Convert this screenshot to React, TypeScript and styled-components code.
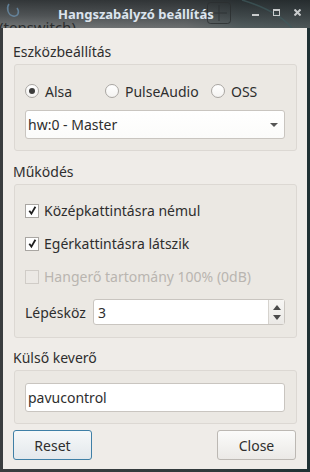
import React from 'react';
import styled, { createGlobalStyle } from 'styled-components';

const Global = createGlobalStyle`
  html, body { margin: 0; padding: 0; }
  body {
    background: #2b2f31;
    font-family: "Noto Sans", "DejaVu Sans", sans-serif;
    font-size: 14px;
    color: #2e2e2e;
  }
`;

const Screen = styled.div`
  width: 310px;
  height: 472px;
  display: flex;
  flex-direction: column;
  overflow: hidden;
  background: linear-gradient(90deg, #3a3d3f 0%, #30393b 70%, #1f3033 100%);
`;

const TitleBar = styled.div`
  position: relative;
  height: 28px;
  flex: none;
  overflow: hidden;
  background:
    linear-gradient(180deg, rgba(40, 44, 46, 0.85) 0%, rgba(70, 74, 76, 0.75) 55%, rgba(120, 122, 122, 0.55) 100%),
    linear-gradient(90deg, #6d7274 0%, #5d6163 60%, #24393c 78%, #1a2c2f 100%);
`;

const Title = styled.div`
  position: absolute;
  left: 58px;
  top: 5px;
  font-weight: bold;
  font-size: 13px;
  color: #dce4ee;
`;

const BehindText = styled.div`
  position: absolute;
  left: -1px;
  top: 17px;
  font-size: 15px;
  color: #2a2c2d;
`;

const Decor = styled.svg`
  position: absolute;
  top: 0;
  left: 0;
`;

const WinButtons = styled.div`
  position: absolute;
  right: 9px;
  top: 9px;
  display: flex;
  gap: 14px;
`;

const Body = styled.div`
  margin: 0 3px;
  height: 441px;
  flex: none;
  background: #efece8;
  padding: 13px 10px 0 10px;
  box-sizing: border-box;
  display: flex;
  flex-direction: column;
`;

const SectionLabel = styled.div<{ $top?: number }>`
  height: 22px;
  line-height: 22px;
  margin-top: ${(p) => p.$top ?? 0}px;
  color: #2e2e2e;
`;

const Group = styled.div<{ $pad: string }>`
  margin: 1px 0 0 1px;
  width: 283px;
  box-sizing: border-box;
  border: 1px solid #dcd8d3;
  border-radius: 3px;
  background: #ebe8e3;
  padding: ${(p) => p.$pad};
  display: flex;
  flex-direction: column;
`;

const RadioRow = styled.div`
  display: flex;
  align-items: center;
  height: 28px;
`;

const RadioItem = styled.label<{ $w: number }>`
  display: flex;
  align-items: center;
  gap: 6px;
  width: ${(p) => p.$w}px;
  flex: none;
`;

const RadioCircle = styled.span<{ $on?: boolean }>`
  width: 12px;
  height: 12px;
  border-radius: 50%;
  border: 1px solid #a9a6a2;
  background: linear-gradient(180deg, #ffffff, #f4f3f1);
  display: flex;
  align-items: center;
  justify-content: center;
  &::after {
    content: '';
    width: 6px;
    height: 6px;
    border-radius: 50%;
    background: ${(p) => (p.$on ? '#3c3c3c' : 'transparent')};
  }
`;

const Combo = styled.div`
  margin-top: 5px;
  height: 29px;
  box-sizing: border-box;
  border: 1px solid #c9c5c0;
  border-radius: 3px;
  background: linear-gradient(180deg, #ffffff, #fbfbfa);
  display: flex;
  align-items: center;
  justify-content: space-between;
  padding: 0 6px 0 2px;
`;

const Arrow = styled.span`
  width: 0;
  height: 0;
  border-left: 4px solid transparent;
  border-right: 4px solid transparent;
  border-top: 4px solid #555;
`;

const CheckRow = styled.label<{ $disabled?: boolean }>`
  display: flex;
  align-items: center;
  gap: 5px;
  height: 33px;
  color: ${(p) => (p.$disabled ? '#b9b5b0' : '#2e2e2e')};
`;

const Box = styled.span<{ $disabled?: boolean }>`
  width: 12px;
  height: 12px;
  border: 1px solid ${(p) => (p.$disabled ? '#d0ccc7' : '#a9a6a2')};
  background: ${(p) => (p.$disabled ? '#ece9e5' : '#ffffff')};
  display: flex;
  align-items: center;
  justify-content: center;
  flex: none;
`;

const SpinRow = styled.div`
  display: flex;
  align-items: center;
  height: 38px;
`;

const Spin = styled.div`
  margin-left: auto;
  width: 192px;
  height: 26px;
  box-sizing: border-box;
  border: 1px solid #c9c5c0;
  border-radius: 3px;
  background: #fff;
  display: flex;
  align-items: stretch;
`;

const SpinText = styled.div`
  flex: 1;
  display: flex;
  align-items: center;
  padding-left: 4px;
`;

const SpinButtons = styled.div`
  width: 15px;
  border-left: 1px solid #d6d3ce;
  background: linear-gradient(180deg, #f7f6f4, #ebe9e6);
  display: flex;
  flex-direction: column;
  align-items: center;
  justify-content: center;
  gap: 5px;
`;

const Tri = styled.span<{ $up?: boolean }>`
  width: 0;
  height: 0;
  border-left: 4px solid transparent;
  border-right: 4px solid transparent;
  ${(p) => (p.$up ? 'border-bottom: 5px solid #4a4a4a;' : 'border-top: 5px solid #4a4a4a;')}
`;

const LineEdit = styled.div`
  height: 29px;
  box-sizing: border-box;
  border: 1px solid #c9c5c0;
  border-radius: 3px;
  background: #fff;
  display: flex;
  align-items: center;
  padding-left: 2px;
`;

const Buttons = styled.div`
  margin-top: 6px;
  padding-right: 1px;
  display: flex;
  justify-content: space-between;
`;

const Button = styled.button<{ $focus?: boolean }>`
  width: 79px;
  height: 30px;
  box-sizing: border-box;
  padding: 0;
  font: inherit;
  font-size: 14px;
  color: #2e2e2e;
  border-radius: 3px;
  border: 1px solid ${(p) => (p.$focus ? '#3f7fa6' : '#bcb8b3')};
  background: ${(p) =>
    p.$focus
      ? 'linear-gradient(180deg, #f6f8f9, #e3e8ec)'
      : 'linear-gradient(180deg, #fbfbfa, #ebe9e6)'};
`;

const Tick = () => (
  <svg width="11" height="11" viewBox="0 0 11 11">
    <path d="M2.3 5.8 L4.4 8.6 L8.4 1.8" fill="none" stroke="#1e1e1e" strokeWidth="1.8" />
  </svg>
);

export default function App() {
  return (
    <>
      <Global />
      <Screen>
        <TitleBar>
          <BehindText>(tenswitch)</BehindText>
          <Decor width="310" height="28">
            <path d="M9 4 C6 8 8 15 13 16 C18 17 20 12 17 8" fill="none" stroke="#6e97b8" strokeWidth="1.5" opacity="0.7" />
            <rect x="207.5" y="2.5" width="23" height="21" rx="3" fill="none" stroke="#2a2e30" strokeWidth="1" opacity="0.8" />
            <path d="M211 13 H227 M219 5 V21" stroke="#2a2e30" strokeWidth="1" opacity="0.8" />
            <path d="M242 0 C262 6 280 14 292 28" fill="none" stroke="#3e5a5d" strokeWidth="1.5" opacity="0.7" />
          </Decor>
          <Title>Hangszabályzó beállítás</Title>
          <WinButtons>
            <svg width="7" height="7" viewBox="0 0 7 7">
              <rect x="0" y="5" width="7" height="2" fill="#c9cccd" />
            </svg>
            <svg width="7" height="7" viewBox="0 0 7 7">
              <rect x="0.5" y="0.5" width="6" height="6" fill="none" stroke="#c9cccd" />
              <rect x="0" y="0" width="7" height="2" fill="#c9cccd" />
            </svg>
            <svg width="7" height="7" viewBox="0 0 7 7">
              <path d="M0.5 0.5 L6.5 6.5 M6.5 0.5 L0.5 6.5" stroke="#c9cccd" strokeWidth="2" />
            </svg>
          </WinButtons>
        </TitleBar>
        <Body>
          <SectionLabel>Eszközbeállítás</SectionLabel>
          <Group $pad="12px 11px 11px 10px">
            <RadioRow>
              <RadioItem $w={80}>
                <RadioCircle $on />
                Alsa
              </RadioItem>
              <RadioItem $w={106}>
                <RadioCircle />
                PulseAudio
              </RadioItem>
              <RadioItem $w={60}>
                <RadioCircle />
                OSS
              </RadioItem>
            </RadioRow>
            <Combo>
              hw:0 - Master
              <Arrow />
            </Combo>
          </Group>

          <SectionLabel $top={10}>Működés</SectionLabel>
          <Group $pad="9px 11px 6px 10px">
            <CheckRow>
              <Box>
                <Tick />
              </Box>
              Középkattintásra némul
            </CheckRow>
            <CheckRow>
              <Box>
                <Tick />
              </Box>
              Egérkattintásra látszik
            </CheckRow>
            <CheckRow $disabled>
              <Box $disabled />
              Hangerő tartomány 100% (0dB)
            </CheckRow>
            <SpinRow>
              Lépésköz
              <Spin>
                <SpinText>3</SpinText>
                <SpinButtons>
                  <Tri $up />
                  <Tri />
                </SpinButtons>
              </Spin>
            </SpinRow>
          </Group>

          <SectionLabel $top={9}>Külső keverő</SectionLabel>
          <Group $pad="12px 11px 11px 10px">
            <LineEdit>pavucontrol</LineEdit>
          </Group>

          <Buttons>
            <Button $focus>Reset</Button>
            <Button>Close</Button>
          </Buttons>
        </Body>
      </Screen>
    </>
  );
}
